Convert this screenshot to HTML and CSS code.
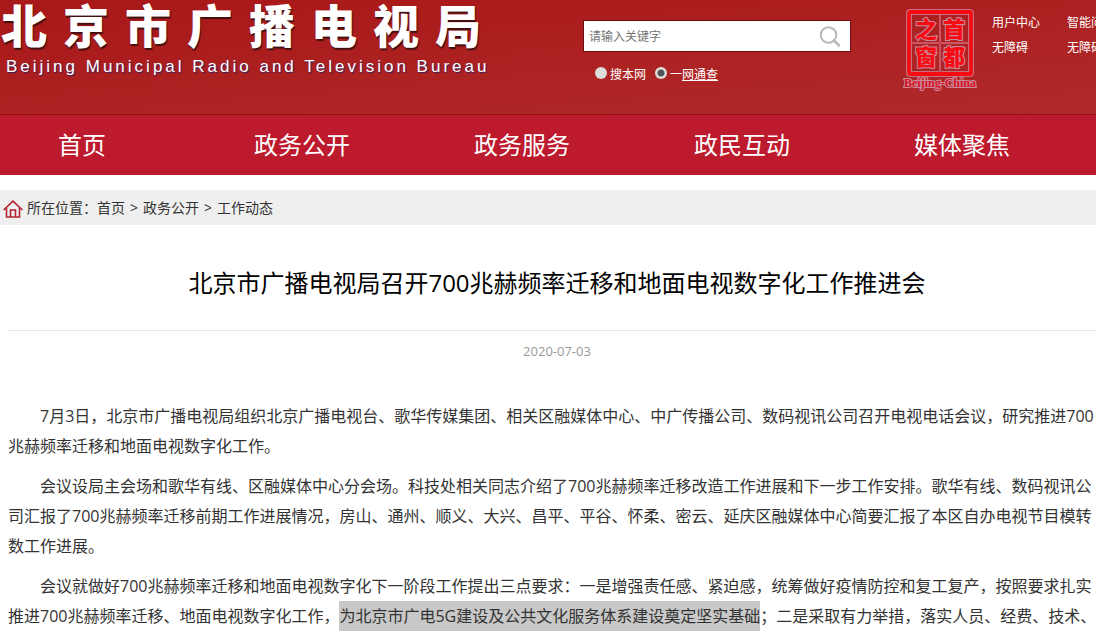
FILE: index.html
```html
<!DOCTYPE html>
<html lang="zh-CN">
<head>
  <meta charset="UTF-8">
  <meta name="viewport" content="width=device-width, initial-scale=1.0">
  <title>北京市广播电视局</title>
  <link rel="stylesheet" href="styles.css">
</head>
<body>
  <header class="header">
    <div class="logo">
      <div class="logo-cn">北京市广播电视局</div>
      <div class="logo-en">Beijing Municipal Radio and Television Bureau</div>
    </div>
    <form class="search">
      <div class="search-box">
        <input type="text" class="search-input" aria-label="请输入关键字" placeholder="请输入关键字">
        <button type="button" class="search-btn" aria-label="搜索">
          <svg width="22" height="22" viewBox="0 0 22 22" fill="none" stroke="#b9b9b9">
            <circle cx="9.5" cy="9" r="7.8" stroke-width="2"/>
            <path d="M15 14.5L20 19.5" stroke-width="2.6" stroke-linecap="round"/>
          </svg>
        </button>
      </div>
      <div class="search-type">
        <input type="radio" name="type" id="local"><label for="local">搜本网</label>
        <input type="radio" name="type" id="all" checked><label for="all">一<u>网通查</u></label>
      </div>
    </form>
    <a href="#" class="seal" aria-label="首都之窗">
      <svg width="76" height="84" viewBox="0 0 76 84">
        <g class="seal-glow" fill="none">
          <rect x="6" y="4" width="62" height="62" rx="1" stroke-width="5.5"/>
          <path d="M37 7V64M8 35H66" stroke-width="2"/>
        </g>
        <rect x="6" y="4" width="62" height="62" rx="1" fill="none" stroke="#f80a12" stroke-width="3.8"/>
        <path d="M37 7V64M8 35H66" stroke="#d3202a" stroke-width="1"/>
        <g class="seal-text">
          <text x="23" y="29">之</text>
          <text x="51" y="29">首</text>
          <text x="23" y="57">窗</text>
          <text x="51" y="57">都</text>
        </g>
        <text class="seal-en" x="37" y="79">Beijing-China</text>
      </svg>
    </a>
    <div class="links">
      <a href="#">用户中心</a>
      <a href="#">智能问答</a>
      <a href="#">无障碍</a>
      <a href="#">无障碍</a>
    </div>
  </header>

  <nav class="nav">
    <ul class="nav-list">
      <li><a href="#">首页</a></li>
      <li><a href="#">政务公开</a></li>
      <li><a href="#">政务服务</a></li>
      <li><a href="#">政民互动</a></li>
      <li><a href="#">媒体聚焦</a></li>
    </ul>
  </nav>

  <div class="location">
    <svg width="20" height="18" viewBox="0 0 20 18" fill="none" stroke="#b5222f" stroke-width="1.6">
      <path d="M0.6 10L10 1.2L19.4 10"/>
      <path d="M3.5 8V17H16.5V8M7.5 17V10H12.5V17"/>
    </svg>
    <span>所在位置：</span>
    <a href="#">首页</a><span class="sep">&gt;</span><a href="#">政务公开</a><span class="sep">&gt;</span><a href="#">工作动态</a>
  </div>

  <main class="article">
    <h1 class="title">北京市广播电视局召开700兆赫频率迁移和地面电视数字化工作推进会</h1>
    <div class="date">2020-07-03</div>
    <div class="content">
      <p>7月3日，北京市广播电视局组织北京广播电视台、歌华传媒集团、相关区融媒体中心、中广传播公司、数码视讯公司召开电视电话会议，研究推进700兆赫频率迁移和地面电视数字化工作。</p>
      <p>会议设局主会场和歌华有线、区融媒体中心分会场。科技处相关同志介绍了700兆赫频率迁移改造工作进展和下一步工作安排。歌华有线、数码视讯公司汇报了700兆赫频率迁移前期工作进展情况，房山、通州、顺义、大兴、昌平、平谷、怀柔、密云、延庆区融媒体中心简要汇报了本区自办电视节目模转数工作进展。</p>
      <p>会议就做好700兆赫频率迁移和地面电视数字化下一阶段工作提出三点要求：一是增强责任感、紧迫感，统筹做好疫情防控和复工复产，按照要求扎实推进700兆赫频率迁移、地面电视数字化工作，<mark>为北京市广电5G建设及公共文化服务体系建设奠定坚实基础</mark>；二是采取有力举措，落实人员、经费、技术、</p>
    </div>
  </main>
</body>
</html>
```

FILE: styles.css
```css
* {
  box-sizing: border-box;
}

body {
  margin: 0;
  background-color: #fff;
  color: #333;
  font-family: "Open Sans", "Noto Sans CJK SC", sans-serif;
  font-size: 14px;
  text-spacing-trim: space-all;
  overflow: hidden;
}

a {
  color: inherit;
  text-decoration: none;
}

.header {
  display: flex;
  height: 115px;
  overflow: hidden;
  background: linear-gradient(175deg, #aa1919 10%, #b02a2b 100%);
  border-bottom: 1px solid #8f1018;
  color: #fff;
}

.logo {
  flex: 0 0 583px;
  padding-left: 1px;
  white-space: nowrap;
}

.logo-cn {
  font-family: "Noto Sans CJK SC", sans-serif;
  font-size: 46px;
  font-weight: 900;
  line-height: 46px;
  letter-spacing: 16px;
  text-shadow: 1px 2px 1px #401010;
}

.logo-en {
  margin-top: 11px;
  padding-left: 5px;
  font-family: "Liberation Sans", Arial, sans-serif;
  font-size: 17px;
  line-height: 20px;
  letter-spacing: 3px;
  text-shadow: 1px 1px 1px #2a2560;
}

.search {
  flex: 0 0 268px;
  padding-top: 20px;
}

.search-box {
  display: flex;
  height: 32px;
  border: 1px solid #6d0c12;
  background-color: #fff;
}

.search-input {
  flex: 1;
  min-width: 0;
  padding: 0 0 0 5px;
  border: 0;
  outline: 0;
  font-family: inherit;
  font-size: 12px;
}

.search-input::placeholder {
  color: #757575;
}

.search-btn {
  width: 40px;
  padding: 4px 0 0;
  border: 0;
  background: none;
}

.search-type {
  display: flex;
  align-items: center;
  padding: 13px 0 0 12px;
  font-size: 12px;
  line-height: 20px;
}

.search-type input {
  appearance: none;
  width: 12px;
  height: 12px;
  margin: 0 3px 5px 0;
  border-radius: 50%;
  background-color: #ddd;
}

.search-type input:checked {
  background: radial-gradient(circle at center, #555 3px, #ddd 4px);
}

.search-type label {
  margin-right: 9px;
}

.seal {
  margin: 8px 0 0 52px;
}

.seal-glow {
  stroke: #c98a9c;
}

.seal-text {
  fill: #f80a12;
  stroke: #c98a9c;
  stroke-width: 2px;
  paint-order: stroke;
  font-size: 22px;
  font-weight: 900;
  text-anchor: middle;
}

.seal-en {
  fill: #d80f1c;
  stroke: #c98a9c;
  stroke-width: 2px;
  paint-order: stroke;
  font-family: "Liberation Serif", serif;
  font-size: 12px;
  font-weight: bold;
  text-anchor: middle;
}

.links {
  display: grid;
  grid-template-columns: 75px 75px;
  grid-auto-rows: 25px;
  margin: 10px 0 0 13px;
  font-size: 12px;
  line-height: 25px;
  white-space: nowrap;
}

.nav {
  background-color: #bd1a2d;
}

.nav-list {
  display: grid;
  grid-template-columns: repeat(5, 1fr);
  margin: 0 24px 0 -28px;
  padding: 0;
  list-style: none;
}

.nav-list a {
  display: block;
  color: #fff;
  font-size: 24px;
  line-height: 60px;
  text-align: center;
}

.location {
  display: flex;
  align-items: center;
  margin-top: 15px;
  padding-left: 3px;
  background-color: #efefef;
  line-height: 35px;
}

.location svg {
  margin: 3px 4px 0 0;
}

.sep {
  margin: 0 5px;
}

.article {
  margin: 0 -10px 0 8px;
}

.title {
  margin: 0;
  padding: 39px 0 28px;
  border-bottom: 1px solid #e5e5e5;
  color: #000;
  font-size: 24px;
  font-weight: normal;
  line-height: 38px;
  text-align: center;
}

.date {
  color: #999;
  font-size: 13px;
  line-height: 40px;
  text-align: center;
}

.content {
  padding-top: 30px;
  font-size: 16px;
  line-height: 30px;
}

.content p {
  margin: 0 0 10px;
  text-indent: 2em;
}

.content mark {
  padding: 4px 0;
  background-color: #c8c8c8;
  color: inherit;
}
```
